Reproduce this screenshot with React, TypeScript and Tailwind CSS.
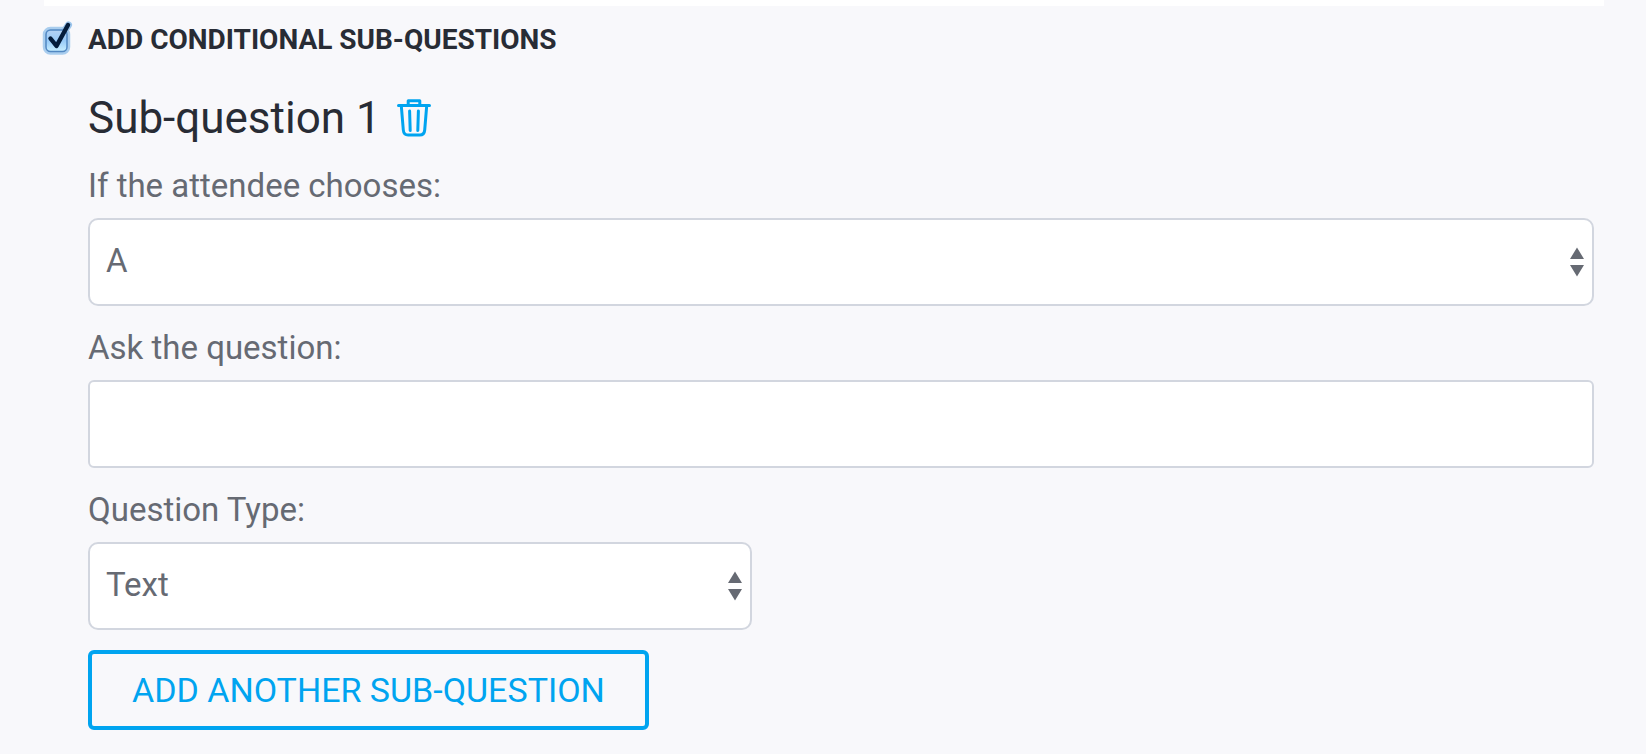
import { useState, type ReactNode } from "react";

const CHOICES = ["A", "B", "C"];
const QUESTION_TYPES = ["Text", "Paragraph", "Radio buttons", "Dropdown"];

export default function App() {
  const [enabled, setEnabled] = useState(true);

  return (
    <main className="min-h-screen bg-[#f8f8fb] pr-[42px] pb-6 pl-11 font-[Roboto,sans-serif] text-[#282c35]">
      <div className="h-1.5 bg-white" />

      <label className="flex h-17 items-center gap-4 text-[28px] leading-8 font-bold">
        <span className="relative size-7 shrink-0">
          <input
            type="checkbox"
            className="absolute inset-0 size-7 cursor-pointer appearance-none"
            checked={enabled}
            onChange={(e) => setEnabled(e.target.checked)}
          />
          <CheckboxIcon checked={enabled} />
        </span>
        ADD CONDITIONAL SUB-QUESTIONS
      </label>

      <section className="pt-[18px] pr-2.5 pl-11">
        <div className="flex h-13 items-center gap-4">
          <h2 className="text-[44px] leading-13">Sub-question 1</h2>
          <button type="button" aria-label="Delete sub-question" className="cursor-pointer">
            <TrashIcon />
          </button>
        </div>

        <FieldLabel htmlFor="choice">If the attendee chooses:</FieldLabel>
        <SelectField id="choice" options={CHOICES} />

        <FieldLabel htmlFor="question">Ask the question:</FieldLabel>
        <input
          id="question"
          type="text"
          className="block h-[88px] w-full rounded-md border-2 border-[#d2d6df] bg-white px-4 text-[33px] text-[#666a73]"
        />

        <FieldLabel htmlFor="type">Question Type:</FieldLabel>
        <div className="max-w-[664px]">
          <SelectField id="type" options={QUESTION_TYPES} />
        </div>

        <button
          type="button"
          className="mt-5 h-20 cursor-pointer rounded-md border-4 border-[#00a4f0] px-10 text-[34px] text-[#00a4f0]"
        >
          ADD ANOTHER SUB-QUESTION
        </button>
      </section>
    </main>
  );
}

function FieldLabel({ htmlFor, children }: { htmlFor: string; children: ReactNode }) {
  return (
    <label htmlFor={htmlFor} className="block pt-[22px] pb-3 text-[33px] leading-10 text-[#666a73]">
      {children}
    </label>
  );
}

function SelectField({ id, options }: { id: string; options: string[] }) {
  return (
    <div className="relative">
      <select
        id={id}
        className="block h-[88px] w-full appearance-none rounded-[10px] border-2 border-[#d2d6df] bg-white px-4 pb-0.5 text-[33px] text-[#666a73]"
      >
        {options.map((option) => (
          <option key={option}>{option}</option>
        ))}
      </select>
      <svg
        className="pointer-events-none absolute top-[29px] right-2.5 h-[30px] w-3.5 fill-[#666a73]"
        viewBox="0 0 14 30"
        aria-hidden="true"
      >
        <path d="M7 .5 14 12H0zM0 18h14L7 29.5z" />
      </svg>
    </div>
  );
}

function CheckboxIcon({ checked }: { checked: boolean }) {
  return (
    <svg
      className="pointer-events-none absolute inset-0 size-7 overflow-visible"
      viewBox="0 0 28 28"
      fill="none"
      aria-hidden="true"
    >
      <defs>
        <linearGradient id="box-fill" x1="0" y1="0" x2="0" y2="1">
          <stop offset="0" stopColor="#b4d3f5" />
          <stop offset="0.5" stopColor="#98caf8" />
          <stop offset="1" stopColor="#c8efff" />
        </linearGradient>
      </defs>
      <rect x="0.5" y="2.5" width="24" height="24.5" rx="6" stroke="#a9cdee" strokeWidth="3.5" />
      <path d="m18.5 8 6-9" stroke="#9cc5ec" strokeWidth="7" strokeLinecap="round" />
      <rect x="2" y="4" width="21" height="21.5" rx="4.5" fill="url(#box-fill)" stroke="#5288c2" strokeWidth="1.5" />
      {checked && (
        <path d="m6.5 12.5 6 7.5L24-1" stroke="#041c3b" strokeWidth="4.4" strokeLinecap="round" strokeLinejoin="round" />
      )}
    </svg>
  );
}

function TrashIcon() {
  return (
    <svg
      className="block h-[38px] w-[34px]"
      viewBox="0 0 34 38"
      fill="none"
      stroke="#00a4f0"
      strokeWidth="3"
      strokeLinecap="round"
      strokeLinejoin="round"
      aria-hidden="true"
    >
      <path d="M1.5 6.4h31M11.2 6V1.8h11.6V6M4.3 6.8l2 24.2c.3 3.5 1.8 5.1 4.9 5.1h11.6c3.1 0 4.6-1.6 4.9-5.1l2-24.2M12.6 12l.6 19.5M21.4 12l-.6 19.5" />
    </svg>
  );
}
